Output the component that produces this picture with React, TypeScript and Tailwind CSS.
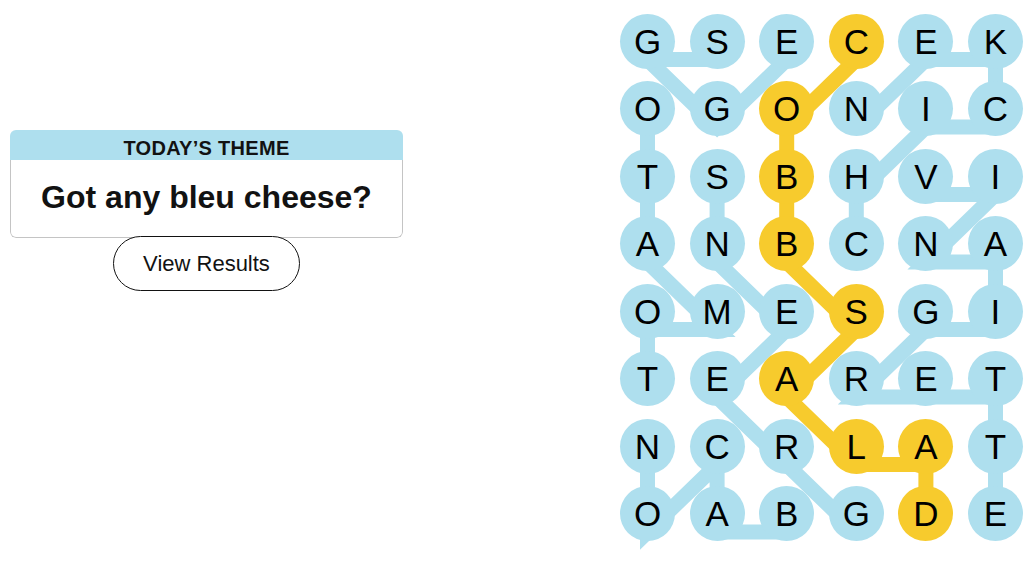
import React from "react";

const GRID = [
  "GSECEK",
  "OGONIC",
  "TSBHVI",
  "ANBCNA",
  "OMESGI",
  "TEARET",
  "NCRLAT",
  "OABGDE",
];

type P = [number, number];

const BLUE_WORDS: P[][] = [
  [[2, 0], [1, 1], [0, 0], [1, 0]],
  [[3, 3], [3, 2], [4, 1], [5, 1], [5, 0], [4, 0], [3, 1]],
  [[4, 2], [5, 2], [4, 3], [5, 3], [5, 4], [4, 4], [3, 5], [4, 5], [5, 5], [5, 6], [5, 7]],
  [[0, 5], [0, 4], [1, 4], [0, 3], [0, 2], [0, 1]],
  [[2, 7], [1, 7], [1, 6], [0, 7], [0, 6]],
  [[3, 7], [2, 6], [1, 5], [2, 4], [1, 3], [1, 2]],
];

const YELLOW: P[] = [[3, 0], [2, 1], [2, 2], [2, 3], [3, 4], [2, 5], [3, 6], [4, 6], [4, 7]];

const PX = 69.6;
const PY = 67.5;
const R = 27.5;
const OFF = 18;

const pts = (w: P[]) =>
  w.map(([c, r]) => `${R + PX * c},${R + PY * r + OFF}`).join(" ");

const yellowSet = new Set(YELLOW.map(([c, r]) => `${c}-${r}`));

export default function App() {
  return (
    <div className="flex h-[580px] w-[1031px] bg-white font-['Liberation_Sans',Arial,sans-serif] text-[#121212]">
      <div className="flex w-[413px] flex-col items-center px-[10px] pt-[130px]">
        <div className="w-full overflow-hidden rounded-[6px]">
          <div className="flex h-[30px] items-center justify-center bg-[#aedfee] pt-[5px] text-[20px] font-bold leading-none tracking-[0.3px]">
            TODAY’S THEME
          </div>
          <div className="flex h-[78px] items-center justify-center rounded-b-[6px] border-x border-b border-[#c4c4c4] pb-[4px] text-[32px] font-bold leading-none">
            Got any bleu cheese?
          </div>
        </div>
        <button className="-mt-[2px] flex h-[55px] w-[187px] items-center justify-center rounded-full border border-[#121212] bg-white text-[22px] leading-none">
          View Results
        </button>
      </div>
      <div className="ml-[207px] pt-[13.5px]">
        <div className="relative h-[527.5px] w-[403px]">
          <svg
            className="absolute left-0 top-0 overflow-visible"
            width="403"
            height="527.5"
          >
            {BLUE_WORDS.map((w, i) => (
              <polyline
                key={i}
                points={pts(w)}
                fill="none"
                stroke="#aedfee"
                strokeWidth={15}
                strokeLinejoin="miter"
                strokeLinecap="butt"
              />
            ))}
            <polyline
              points={pts(YELLOW)}
              fill="none"
              stroke="#f7cb2d"
              strokeWidth={15}
              strokeLinejoin="miter"
              strokeLinecap="butt"
            />
          </svg>
          <div className="relative grid grid-cols-[repeat(6,55px)] gap-x-[14.6px] gap-y-[12.5px]">
            {GRID.map((row, r) =>
              row.split("").map((ch, c) => (
                <div
                  key={`${r}-${c}`}
                  className={
                    yellowSet.has(`${c}-${r}`)
                      ? "flex h-[55px] w-[55px] items-center justify-center rounded-full bg-[#f7cb2d] text-[35px] leading-none text-black"
                      : "flex h-[55px] w-[55px] items-center justify-center rounded-full bg-[#aedfee] text-[35px] leading-none text-black"
                  }
                >
                  {ch}
                </div>
              ))
            )}
          </div>
        </div>
      </div>
    </div>
  );
}
